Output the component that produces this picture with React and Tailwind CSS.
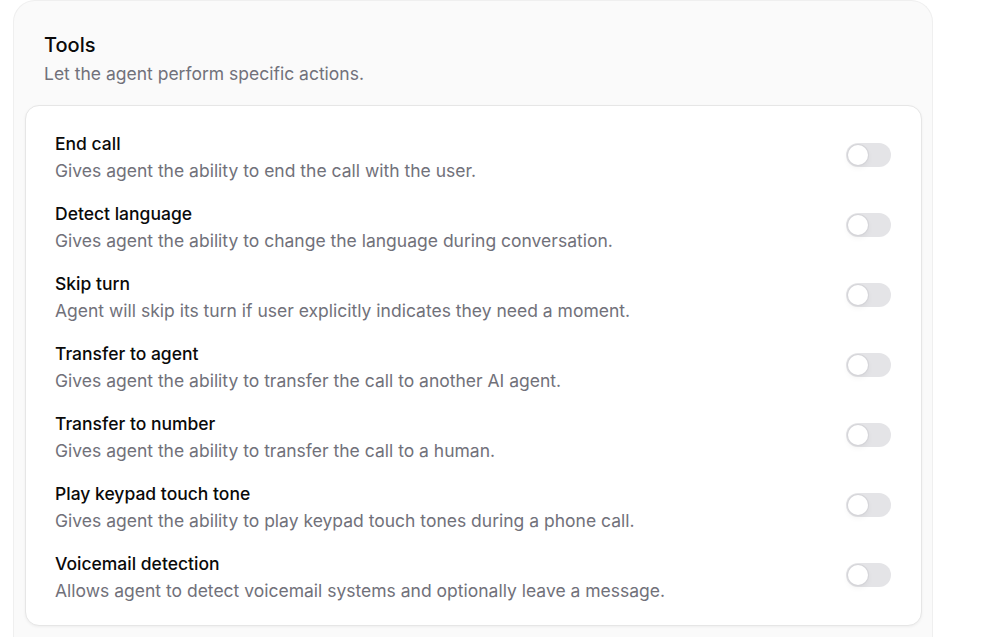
import React, { useState } from 'react';

const tools = [
  { name: 'End call', desc: 'Gives agent the ability to end the call with the user.' },
  { name: 'Detect language', desc: 'Gives agent the ability to change the language during conversation.' },
  { name: 'Skip turn', desc: 'Agent will skip its turn if user explicitly indicates they need a moment.' },
  { name: 'Transfer to agent', desc: 'Gives agent the ability to transfer the call to another AI agent.' },
  { name: 'Transfer to number', desc: 'Gives agent the ability to transfer the call to a human.' },
  { name: 'Play keypad touch tone', desc: 'Gives agent the ability to play keypad touch tones during a phone call.' },
  { name: 'Voicemail detection', desc: 'Allows agent to detect voicemail systems and optionally leave a message.' },
];

const Toggle = ({ on, onChange }) => (
  <button
    onClick={onChange}
    className={`mt-[12px] flex h-6 w-[45px] shrink-0 items-center rounded-full p-[2px] transition-colors ${
      on ? 'bg-[#18181b]' : 'bg-[#e4e4e7]'
    }`}
  >
    <span
      className={`h-5 w-5 rounded-full bg-white shadow-[0_3px_6px_rgba(0,0,0,0.06)] ring-1 ring-[#d4d4d8] transition-transform ${
        on ? 'translate-x-[21px]' : 'translate-x-0'
      }`}
    />
  </button>
);

const App = () => {
  const [enabled, setEnabled] = useState({});

  return (
    <div className="min-h-screen bg-white font-['Inter',sans-serif] antialiased">
      <div className="ml-[13px] w-[920px] rounded-t-[22px] border border-b-0 border-[#efefef] bg-[#fafafa] pb-4">
        <div className="px-[30px] pt-[30px]">
          <h2 className="text-[20px] font-medium leading-[28px] text-[#0a0a0a]">Tools</h2>
          <p className="mt-[2px] text-[17.5px] leading-[25px] text-[#71717a]">Let the agent perform specific actions.</p>
        </div>
        <div className="ml-[11px] mr-[10px] mt-[19px] rounded-[14px] border border-[#e6e6e6] bg-white pb-[22px] pl-[29px] pr-[30px] pt-[25px] shadow-[0_1px_3px_rgba(0,0,0,0.05)]">
          <div className="flex flex-col gap-[18px]">
            {tools.map((t) => (
              <div key={t.name} className="flex items-start justify-between">
                <div>
                  <div className="text-[17.5px] font-medium leading-[25px] text-[#0a0a0a]">{t.name}</div>
                  <div className="mt-[2px] text-[17.5px] leading-[25px] text-[#71717a]">{t.desc}</div>
                </div>
                <Toggle
                  on={!!enabled[t.name]}
                  onChange={() => setEnabled((s) => ({ ...s, [t.name]: !s[t.name] }))}
                />
              </div>
            ))}
          </div>
        </div>
      </div>
    </div>
  );
};

export default App;
